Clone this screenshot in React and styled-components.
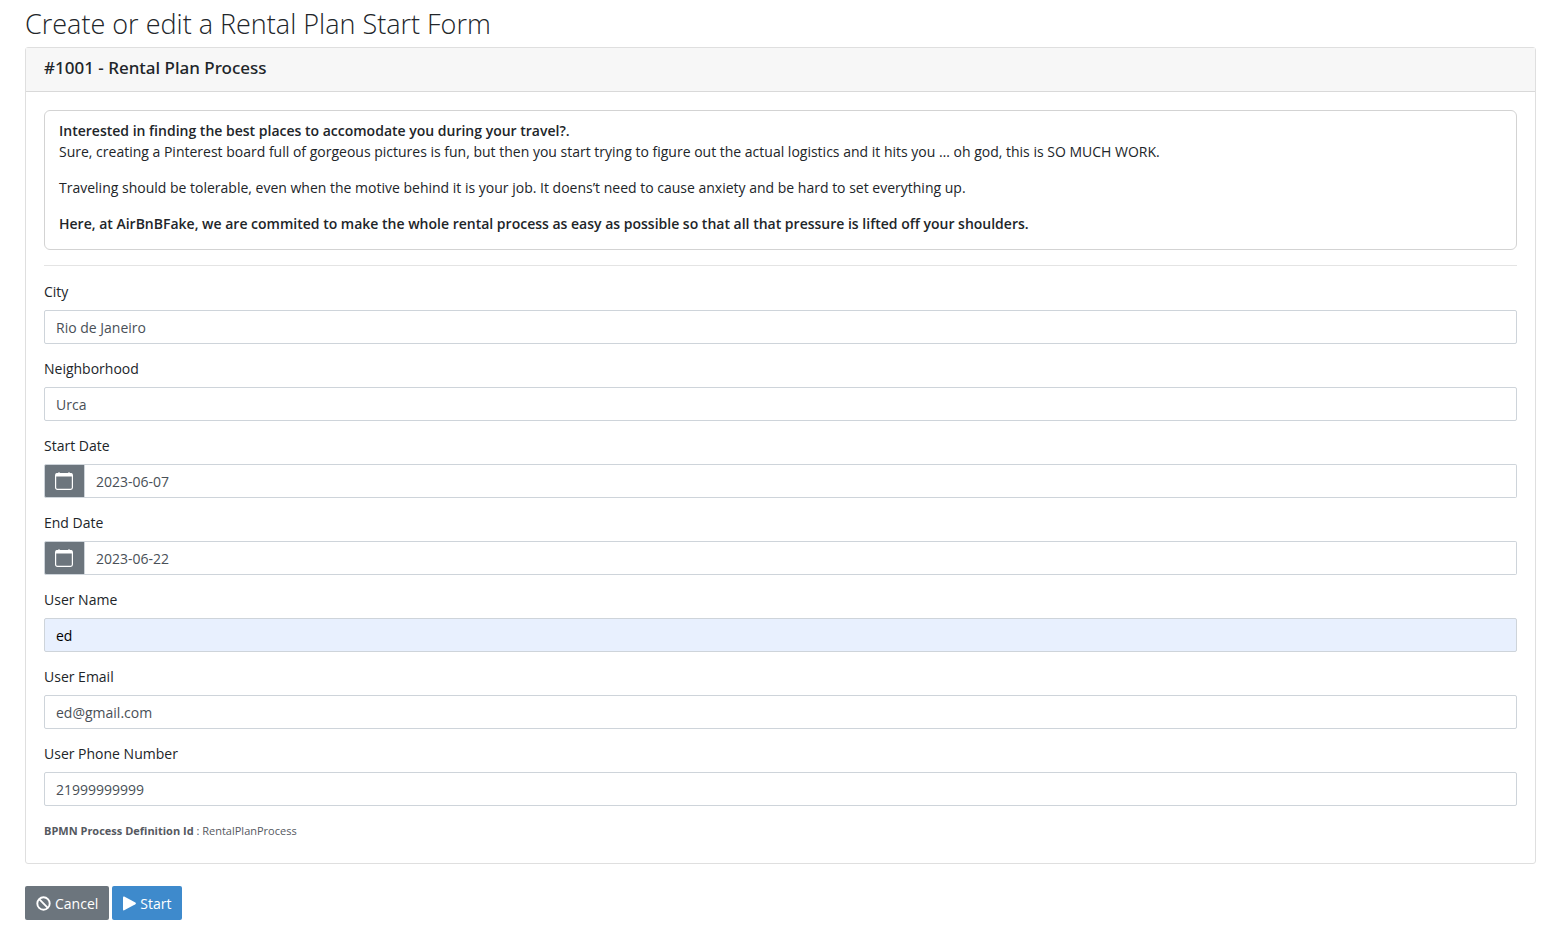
import React, { useState } from "react";
import styled, { createGlobalStyle } from "styled-components";

const GlobalStyle = createGlobalStyle`
  *, *::before, *::after { box-sizing: border-box; }
  body {
    margin: 0;
    background: #fff;
    color: #212529;
    font: 400 14px/21px "Segoe UI", "Open Sans", "Noto Sans", sans-serif;
  }
  strong { font-weight: 600; }
`;

const Page = styled.form`
  padding: 5px 10px 10px 25px;
`;

const Title = styled.h2`
  margin: 0 0 4px;
  font-size: 27px;
  font-weight: 300;
  line-height: 38px;
`;

const Card = styled.section`
  border: 1px solid #dfdfdf;
  border-radius: 3px;
`;

const CardHeader = styled.header`
  padding: 8px 18px 12px;
  background: #f7f7f7;
  border-bottom: 1px solid #d9d9d9;
`;

const CardTitle = styled.h4`
  margin: 0;
  font-family: "Segoe UI", "Noto Sans", sans-serif;
  font-size: 17px;
  font-weight: 500;
  line-height: 23px;
`;

const CardBody = styled.div`
  padding: 18px 18px 23px;
`;

const Intro = styled.div`
  padding: 9px 14px 15px;
  border: 1px solid #d3d3d3;
  border-radius: 6px;
`;

const Paragraph = styled.p`
  margin: 0 0 15px;
  &:last-child { margin-bottom: 0; }
`;

const Divider = styled.hr`
  margin: 15px 0;
  border: 0;
  border-top: 1px solid #e4e4e4;
`;

const Field = styled.div`
  margin-bottom: 14px;
`;

const Label = styled.label`
  display: block;
  margin-bottom: 8px;
`;

const InputRow = styled.div`
  display: flex;
`;

const Input = styled.input`
  flex: 1;
  min-width: 0;
  height: 34px;
  padding: 1px 11px 0;
  border: 1px solid #ced4da;
  border-left-width: ${(p) => (p.$joined ? 0 : 1)}px;
  border-radius: ${(p) => (p.$joined ? "0 2px 2px 0" : "2px")};
  background: ${(p) => (p.$filled ? "#e8f0fe" : "#fff")};
  color: ${(p) => (p.$filled ? "#000" : "#495057")};
  font: inherit;
`;

const DateButton = styled.button`
  display: flex;
  align-items: center;
  justify-content: center;
  width: 41px;
  height: 34px;
  padding: 0 2px 0 0;
  border: 1px solid #ced4da;
  border-radius: 2px 0 0 2px;
  background: #6c757d;
  color: #fff;
`;

const Definition = styled.p`
  margin: 0;
  padding-top: 2px;
  color: #55595f;
  font-size: 11px;
  line-height: 18px;
  strong { font-weight: 700; }
`;

const Actions = styled.div`
  display: flex;
  gap: 3px;
  margin-top: 22px;
`;

const Button = styled.button`
  display: flex;
  align-items: center;
  gap: 4px;
  height: 34px;
  padding: 0 11px;
  border: 0;
  border-radius: 2px;
  background: ${(p) => (p.$primary ? "#3e8acc" : "#6c757d")};
  color: #fff;
  font: inherit;
`;

const CalendarIcon = () => (
  <svg width="18" height="18" viewBox="0 0 18 18" fill="none" aria-hidden="true">
    <rect x="0.6" y="1.6" width="16.8" height="15.8" rx="1.8" stroke="currentColor" strokeWidth="1.2" />
    <path d="M0.5 4.5V3Q0.5 1 2.5 1H15.5Q17.5 1 17.5 3V4.5ZM3.5 0h1v1.5h-1zM13.5 0h1v1.5h-1z" fill="currentColor" />
  </svg>
);

const BanIcon = () => (
  <svg width="15" height="15" viewBox="0 0 15 15" fill="none" stroke="currentColor" strokeWidth="1.9" aria-hidden="true">
    <circle cx="7.5" cy="7.5" r="6.2" />
    <path d="M3.2 3.2 11.8 11.8" />
  </svg>
);

const PlayIcon = () => (
  <svg width="13" height="15" viewBox="0 0 13 15" fill="currentColor" aria-hidden="true">
    <path d="M0 1.4Q0 0.2 1.2 0.6L12.4 6.6Q13.4 7.4 12.4 8.2L1.2 14.3Q0 14.7 0 13.5Z" />
  </svg>
);

const FIELDS = [
  { id: "city", label: "City", value: "Rio de Janeiro" },
  { id: "neighborhood", label: "Neighborhood", value: "Urca" },
  { id: "start-date", label: "Start Date", value: "2023-06-07", date: true },
  { id: "end-date", label: "End Date", value: "2023-06-22", date: true },
  { id: "user-name", label: "User Name", value: "ed", filled: true },
  { id: "user-email", label: "User Email", value: "ed@gmail.com" },
  { id: "user-phone", label: "User Phone Number", value: "21999999999" },
];

function FormField({ id, label, value, date, filled }) {
  const [text, setText] = useState(value);
  return (
    <Field>
      <Label htmlFor={id}>{label}</Label>
      <InputRow>
        {date && (
          <DateButton type="button" aria-label={`Choose ${label}`}>
            <CalendarIcon />
          </DateButton>
        )}
        <Input id={id} type="text" value={text} $joined={date} $filled={filled} onChange={(e) => setText(e.target.value)} />
      </InputRow>
    </Field>
  );
}

export default function App() {
  return (
    <>
      <GlobalStyle />
      <Page onSubmit={(e) => e.preventDefault()}>
        <Title>Create or edit a Rental Plan Start Form</Title>
        <Card>
          <CardHeader>
            <CardTitle>#1001 - Rental Plan Process</CardTitle>
          </CardHeader>
          <CardBody>
            <Intro>
              <Paragraph>
                <strong>Interested in finding the best places to accomodate you during your travel?.</strong>
                <br />
                Sure, creating a Pinterest board full of gorgeous pictures is fun, but then you start trying to figure out the actual logistics and it hits you … oh god, this is SO MUCH WORK.
              </Paragraph>
              <Paragraph>
                Traveling should be tolerable, even when the motive behind it is your job. It doens’t need to cause anxiety and be hard to set everything up.
              </Paragraph>
              <Paragraph>
                <strong>Here, at AirBnBFake, we are commited to make the whole rental process as easy as possible so that all that pressure is lifted off your shoulders.</strong>
              </Paragraph>
            </Intro>
            <Divider />
            {FIELDS.map((field) => (
              <FormField key={field.id} {...field} />
            ))}
            <Definition>
              <strong>BPMN Process Definition Id</strong> : RentalPlanProcess
            </Definition>
          </CardBody>
        </Card>
        <Actions>
          <Button type="button"><BanIcon />Cancel</Button>
          <Button type="submit" $primary><PlayIcon />Start</Button>
        </Actions>
      </Page>
    </>
  );
}
